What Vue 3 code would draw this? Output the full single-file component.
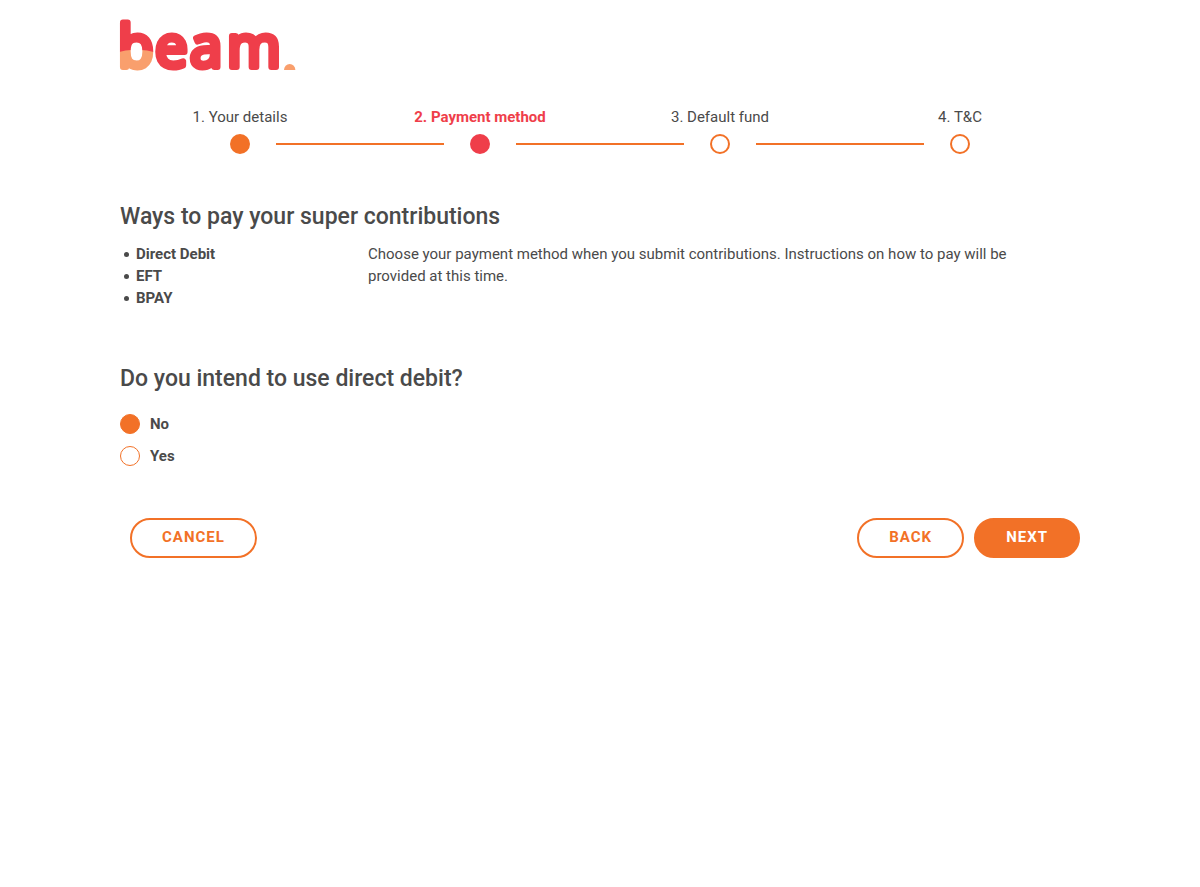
<script setup>
import { ref } from 'vue'

const steps = [
  { label: '1. Your details', state: 'done' },
  { label: '2. Payment method', state: 'current' },
  { label: '3. Default fund', state: 'todo' },
  { label: '4. T&C', state: 'todo' },
]
const methods = ['Direct Debit', 'EFT', 'BPAY']
const options = ['No', 'Yes']
const directDebit = ref('No')
</script>

<template>
  <div class="page">
    <header>
      <svg class="logo" width="176" height="50" viewBox="0 0 176 50" role="img" aria-label="beam.">
        <defs>
          <pattern id="wave" patternUnits="userSpaceOnUse" x="-5" y="-5" width="50" height="60">
            <rect width="50" height="60" fill="#ef3e4a" />
            <path d="M0 38 Q21 31 43 38 V60 H0 Z" fill="#f99f6d" />
          </pattern>
        </defs>
        <text class="wordmark" y="47" x="-2 35 70 107"><tspan class="tint">b</tspan>eam</text>
        <path d="M164 50 A5.7 6 0 0 1 175.400 50 Z" fill="#f99f6d" />
      </svg>
    </header>

    <ol class="steps">
      <li v-for="step in steps" :key="step.label" :class="['step', step.state]">
        <span class="step-label">{{ step.label }}</span>
        <span class="dot"></span>
      </li>
    </ol>

    <main>
      <section>
        <h2>Ways to pay your super contributions</h2>
        <div class="ways-body">
          <ul>
            <li v-for="method in methods" :key="method">{{ method }}</li>
          </ul>
          <p>
            Choose your payment method when you submit contributions. Instructions on how to pay will be
            provided at this time.
          </p>
        </div>
      </section>

      <form @submit.prevent>
        <fieldset>
          <legend>Do you intend to use direct debit?</legend>
          <label v-for="option in options" :key="option" class="option">
            <input v-model="directDebit" type="radio" name="direct-debit" :value="option" />
            {{ option }}
          </label>
        </fieldset>
        <div class="actions">
          <button type="button" class="cancel">CANCEL</button>
          <button type="button">BACK</button>
          <button type="submit" class="primary">NEXT</button>
        </div>
      </form>
    </main>
  </div>
</template>

<style>
body {
  margin: 0;
  background: #fff;
}
</style>

<style scoped>
.page {
  max-width: 960px;
  margin: 0 auto;
  padding: 20px 0;
  font: 400 15px/22px Roboto, "Liberation Sans", sans-serif;
  color: #4a4a4a;
}
.logo {
  display: block;
  overflow: visible;
}
.wordmark {
  font: 400 58px "Open Sans", sans-serif;
  fill: #ef3e4a;
  stroke: #ef3e4a;
  stroke-width: 6px;
  stroke-linejoin: round;
}
.wordmark .tint {
  fill: url(#wave);
  stroke: url(#wave);
}
.steps {
  display: flex;
  margin: 36px 0 50px;
  padding: 0;
  list-style: none;
}
.step {
  position: relative;
  flex: 1;
  display: flex;
  flex-direction: column;
  align-items: center;
  gap: 6px;
}
.step:not(:last-child)::after {
  content: "";
  position: absolute;
  left: 65%;
  bottom: 9px;
  width: 70%;
  height: 2px;
  background: #f27127;
}
.dot {
  box-sizing: border-box;
  width: 20px;
  height: 20px;
  border: 2px solid #f27127;
  border-radius: 50%;
}
.done .dot {
  background: #f27127;
}
.current .dot {
  background: #ef3e4a;
  border-color: #ef3e4a;
}
.current .step-label {
  color: #ef3e4a;
  font-weight: 700;
}
h2,
legend {
  margin: 0;
  padding: 0;
  font-size: 23px;
  line-height: 26px;
  font-weight: 500;
}
.ways-body {
  display: grid;
  grid-template-columns: 232px 1fr;
  gap: 16px;
  margin-top: 13px;
}
ul {
  margin: 0;
  padding: 0 0 0 4px;
  font-weight: 700;
  list-style: none;
}
ul li {
  display: flex;
  align-items: center;
  gap: 7px;
}
ul li::before {
  content: "";
  width: 5px;
  height: 5px;
  border-radius: 50%;
  background: currentColor;
}
p {
  margin: 0;
  padding-right: 40px;
}
fieldset {
  min-width: 0;
  margin: 57px 0 0;
  padding: 0;
  border: 0;
}
legend {
  margin-bottom: 21px;
}
.option {
  display: flex;
  align-items: center;
  gap: 10px;
  width: fit-content;
  font-weight: 700;
}
.option + .option {
  margin-top: 10px;
}
.option input {
  appearance: none;
  box-sizing: border-box;
  width: 20px;
  height: 20px;
  margin: 0;
  border: 1px solid #f27127;
  border-radius: 50%;
  background: #fff;
}
.option input:checked {
  background: #f27127;
}
.actions {
  display: flex;
  gap: 10px;
  margin: 51px 0 0 10px;
}
button {
  height: 40px;
  padding: 0 30px 2px;
  border: 2px solid #f27127;
  border-radius: 20px;
  background: #fff;
  color: #f27127;
  font: inherit;
  font-weight: 700;
  letter-spacing: 1px;
  cursor: pointer;
}
.cancel {
  margin-right: auto;
}
.primary {
  background: #f27127;
  color: #fff;
}
</style>
